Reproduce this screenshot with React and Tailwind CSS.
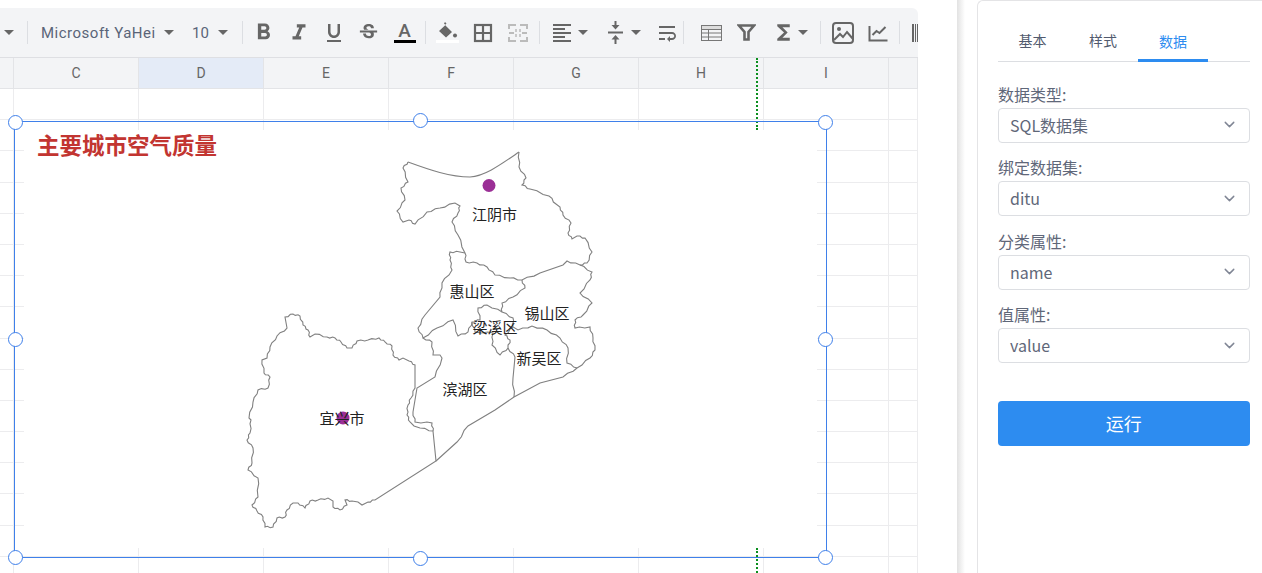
import { ChevronDown } from "lucide-react";
import {
  MdFormatBold,
  MdFormatItalic,
  MdFormatUnderlined,
  MdStrikethroughS,
  MdFormatAlignLeft,
  MdWrapText,
  MdFunctions,
} from "react-icons/md";

const cols = ["", "C", "D", "E", "F", "G", "H", "I", ""];
const colWidths = ["w-[14px]", "w-[125px]", "w-[125px]", "w-[125px]", "w-[125px]", "w-[125px]", "w-[125px]", "w-[125px]", "w-[29px]"];
const rows = Array.from({ length: 16 });

const Sep = ({ className = "" }) => <div className={`w-px h-[23px] bg-[#dcdee2] shrink-0 ${className}`} />;

const Caret = ({ className = "" }) => (
  <span className={`w-0 h-0 shrink-0 border-x-[5px] border-x-transparent border-t-[5px] border-t-[#666] ${className}`} />
);

const Tool = ({ children, className = "w-[35px]" }) => (
  <div className={`shrink-0 flex items-center justify-center text-[#666] ${className}`}>{children}</div>
);

const FillIcon = () => (
  <div className="flex flex-col items-center">
    <svg width="20" height="17" viewBox="0 0 20 17" fill="#666">
      <path d="M7 0l1.5 1.5-1.5 1.5 7 7-6 5.5-7-6.5 6.5-6-1.5-1.5z" />
      <circle cx="17" cy="13.5" r="2" />
    </svg>
    <span className="w-[23px] h-[3px] bg-white mt-[1px]" />
  </div>
);

const GridIcon = () => (
  <svg width="20" height="20" viewBox="0 0 20 20" fill="none" stroke="#666" strokeWidth="2.2">
    <rect x="2" y="2" width="16" height="16" />
    <path d="M10 2v16M2 10h16" />
  </svg>
);

const MergeIcon = () => (
  <svg width="20" height="18" viewBox="0 0 20 18" fill="none" stroke="#bbb" strokeWidth="2">
    <path d="M1 5V1h7M12 1h7v4M1 13v4h7M12 17h7v-4M1 9h5M19 9h-5" />
    <path d="M8 5v3M12 5v3M8 10v3M12 10v3" strokeWidth="1.5" />
  </svg>
);

const ValignIcon = () => (
  <svg width="17" height="23" viewBox="0 0 17 23" fill="#666" stroke="none">
    <rect x="1" y="10.5" width="15" height="2" />
    <path d="M7.5 0h2v4h3l-4 4.5-4-4.5h3zM8.5 14l4 4.5h-3V23h-2v-4.5h-3z" />
  </svg>
);

const TableIcon = () => (
  <svg width="21" height="16" viewBox="0 0 21 16" fill="none" stroke="#777" strokeWidth="1">
    <rect x="0.5" y="0.5" width="20" height="15" fill="#ddd" />
    <rect x="0.5" y="4.5" width="20" height="11" fill="#f3f4f6" />
    <path d="M0.5 8h20M0.5 12h20M7.5 4.5v11" />
  </svg>
);

const FilterIcon = () => (
  <svg width="19" height="17" viewBox="0 0 19 17" fill="none" stroke="#666" strokeWidth="2.6">
    <path d="M2 1.5h15l-5.5 6.5v7.5h-4v-7.5z" />
  </svg>
);

const ImageIcon = () => (
  <svg width="22" height="22" viewBox="0 0 22 22" fill="none" stroke="#666" strokeWidth="2">
    <rect x="1" y="1" width="20" height="20" rx="3" />
    <circle cx="7" cy="7" r="2" fill="#666" stroke="none" />
    <path d="M2 18l6-6 3 3 4-5 6 7" />
  </svg>
);

const ChartIcon = () => (
  <svg width="20" height="20" viewBox="0 0 20 20" fill="none" stroke="#666" strokeWidth="2">
    <path d="M1.5 3v14.5h18" />
    <path d="M4.5 12l4-4 3 2 6-6" />
  </svg>
);

const BarcodeIcon = () => (
  <svg width="16" height="18" viewBox="0 0 16 18" fill="#666" className="ml-[2px]">
    <path d="M0 0h2v18H0zM3 0h1v18H3zM5 0h3v18H5zM9 0h1v18H9z" />
  </svg>
);

const Toolbar = () => (
  <div className="h-[50px] mt-[8px] bg-[#f3f4f6] rounded-tr-[6px] border-b border-[#dedfe3] flex items-center overflow-hidden">
    <Caret className="ml-[4px]" />
    <Sep className="ml-[13px]" />
    <span className="ml-[13px] w-[116px] shrink-0 text-[15px] tracking-[0.5px] text-[#5a6478] font-['Roboto',sans-serif] whitespace-nowrap pt-[1px]">
      Microsoft YaHei
    </span>
    <Caret className="ml-[7px]" />
    <span className="ml-[18px] w-[18px] shrink-0 text-[15px] text-[#5a6478] font-['Roboto',sans-serif] pt-[1px]">10</span>
    <Caret className="ml-[8px]" />
    <Sep className="ml-[14px]" />
    <Tool className="w-[35px] ml-[3px]"><MdFormatBold size={27} /></Tool>
    <Tool><MdFormatItalic size={26} /></Tool>
    <Tool><MdFormatUnderlined size={24} /></Tool>
    <Tool><MdStrikethroughS size={23} /></Tool>
    <Tool className="w-[36px] pl-[1px]">
      <div className="flex flex-col items-center">
        <span className="text-[19px] leading-[17px] text-[#666] font-['Roboto',sans-serif] font-medium">A</span>
        <span className="w-[22px] h-[3px] bg-black mt-[1px]" />
      </div>
    </Tool>
    <Sep className="ml-[3px]" />
    <Tool className="w-[43px]"><FillIcon /></Tool>
    <Tool className="w-[27px]"><GridIcon /></Tool>
    <Tool className="w-[43px]"><MergeIcon /></Tool>
    <Sep />
    <Tool className="w-[44px]"><MdFormatAlignLeft size={24} /></Tool>
    <Caret className="-ml-[6px]" />
    <Tool className="w-[54px]"><ValignIcon /></Tool>
    <Caret className="-ml-[11px]" />
    <Tool className="w-[52px]"><MdWrapText size={24} /></Tool>
    <Sep className="-ml-[10px]" />
    <Tool className="w-[43px] ml-[6px]"><TableIcon /></Tool>
    <Tool className="w-[27px]"><FilterIcon /></Tool>
    <Tool className="w-[46px]"><MdFunctions size={25} /></Tool>
    <Caret className="-ml-[8px]" />
    <Sep className="ml-[12px]" />
    <Tool className="w-[43px]"><ImageIcon /></Tool>
    <Tool className="w-[27px]"><ChartIcon /></Tool>
    <Sep className="ml-[8px]" />
    <Tool className="w-[20px] justify-start ml-[10px]"><BarcodeIcon /></Tool>
  </div>
);

const Sheet = () => (
  <div className="flex flex-col">
    <div className="flex h-[31px] bg-[#f3f4f6] border-b border-[#e3e4e7]">
      {cols.map((c, i) => (
        <div
          key={i}
          className={`${colWidths[i]} shrink-0 border-r border-[#e3e4e7] flex items-center justify-center text-[14px] text-[#666] font-['Roboto',sans-serif] ${c === "D" ? "bg-[#e4ebf7]" : ""}`}
        >
          {c}
        </div>
      ))}
    </div>
    {rows.map((_, r) => (
      <div key={r} className="flex h-[31.2px] shrink-0">
        {cols.map((c, i) => (
          <div key={i} className={`${colWidths[i]} shrink-0 border-r border-b border-[#ececee]`} />
        ))}
      </div>
    ))}
  </div>
);

// short edges get a small wobble so the borders look like real map data, long ones stay straight
const rough = (d) => {
  const pts = d
    .replace(/[MLZ]/g, " ")
    .trim()
    .split(/\s+/)
    .map(Number);
  const closed = /Z/.test(d);
  let out = `M${pts[0]} ${pts[1]}`;
  for (let i = 2; i < pts.length; i += 2) {
    const [x0, y0, x1, y1] = [pts[i - 2], pts[i - 1], pts[i], pts[i + 1]];
    const len = Math.hypot(x1 - x0, y1 - y0);
    if (len > 7 && len < 21) {
      const k = Math.sin(i * 12.9898) > 0 ? 1 : -1;
      const nx = (-(y1 - y0) / len) * 0.7 * k;
      const ny = ((x1 - x0) / len) * 0.7 * k;
      out += ` L${x0 + (x1 - x0) * 0.35 + nx} ${y0 + (y1 - y0) * 0.35 + ny}`;
      out += ` L${x0 + (x1 - x0) * 0.7 - nx} ${y0 + (y1 - y0) * 0.7 - ny}`;
    }
    out += ` L${x1} ${y1}`;
  }
  return closed ? out + " Z" : out;
};

const yixing =
  "M285 317 L293 314 L300 316 L303 325 L308 330 L310 337 L315 334 L327 337 L335 338 L341 342 L347 348 L352 348 L357 341 L368 340 L379 338 L385 342 L392 346 L393 355 L399 360 L403 358 L409 361 L415 365 L415 388 L411 398 L408 405 L407 415 L410 422 L414 426 L420 428 L433 431 L436 461 L375 500 L368 502 L362 505 L358 502 L352 501 L345 500 L347 505 L340 510 L333 507 L333 501 L328 498 L318 500 L310 501 L305 508 L298 503 L293 503 L287 510 L285 517 L277 518 L273 527 L265 527 L263 517 L257 511 L252 505 L258 497 L258 478 L248 470 L252 463 L253 448 L247 440 L250 433 L251 420 L249 418 L253 402 L258 390 L268 388 L270 377 L264 373 L262 360 L267 358 L270 347 L277 336 L287 328 Z";
const jiangyinNorth = "M408 162 C430 170 450 177 470 177 C485 176 500 165 519 152";
const jiangyin =
  "M519 152 L519 167 L526 178 L522 185 L530 189 L549 196 L556 204 L560 207 L563 215 L571 223 L568 233 L572 239 L577 236 L585 238 L592 252 L587 263 L580 265 L567 261 L563 265 L540 273 L522 280 L510 278 L495 275 L487 267 L477 263 L466 262 L465 253 L458 235 L452 222 L458 213 L460 206 L455 203 L440 208 L427 212 L415 224 L409 220 L403 222 L397 211 L405 200 L401 188 L408 182 L403 168 L408 162";
const inner = [
  "M465 253 L460 252 L450 252 L450 260 L452 270 L442 283 L440 297 L425 315 L418 328 L423 338 L437 328 L453 320 L458 336 L468 332 L472 322 L480 320 L478 308 L487 305 L502 312 L513 318 L513 327 L518 330 L532 326 L547 330 L560 338 L568 348 L567 363 L577 368",
  "M522 280 L525 288 L513 297 L502 303 L502 312",
  "M472 322 L475 332 L493 333 L492 345 L500 355 L508 348 L510 340 L505 335 L513 327",
  "M508 348 L515 357 L513 378 L514 397",
  "M423 338 L432 342 L433 355 L440 355 L442 358 L435 377 L417 388 L413 412 L415 422 L432 423 L433 431",
  "M436 461 L457 442 L468 426 L495 410 L514 397 L540 383 L563 377 L577 368 L590 358 L595 350 L593 338 L590 327 L575 328 L575 320 L583 315 L592 303 L580 293 L590 280 L592 272 L580 265",
];

const labels = [
  ["江阴市", 494.5, 220],
  ["惠山区", 472, 297],
  ["锡山区", 547, 319],
  ["梁溪区", 495, 333],
  ["新吴区", 539, 364],
  ["滨湖区", 465, 395],
  ["宜兴市", 342, 424],
];

const handles = [
  "left-[8px] top-[115px]",
  "left-[413px] top-[113px]",
  "left-[818px] top-[115px]",
  "left-[8px] top-[332px]",
  "left-[818px] top-[332px]",
  "left-[8px] top-[550px]",
  "left-[413px] top-[551px]",
  "left-[818px] top-[550px]",
];

const ChartOverlay = () => (
  <>
    <div className="absolute left-[24px] top-[130px] w-[793px] h-[418px] bg-white" />
    <div className="absolute left-[756px] top-[58px] h-[72px] border-l-2 border-dotted border-[#0a8f1e]" />
    <div className="absolute left-[756px] top-[548px] h-[25px] border-l-2 border-dotted border-[#0a8f1e]" />
    <div className="absolute left-[14px] top-[121px] w-[813px] h-[437px] border border-[#3f80ea]" />
    <div className="absolute left-[37px] top-[128px] text-[22.5px] leading-[32px] font-bold text-[#c23531] font-['Noto_Sans_CJK_SC',sans-serif]">
      主要城市空气质量
    </div>
    <svg className="absolute left-0 top-0" width="918" height="573" viewBox="0 0 918 573" fill="none" stroke="#808080" strokeWidth="1.1">
      <path d={rough(yixing)} fill="#fff" />
      <path d={jiangyinNorth} />
      <path d={rough(jiangyin)} />
      {inner.map((d, i) => (
        <path key={i} d={rough(d)} />
      ))}
      <circle cx="489" cy="185.5" r="6.5" fill="#9b2f96" stroke="none" />
      <circle cx="343" cy="418" r="6.5" fill="#9b2f96" stroke="none" />
      {labels.map(([t, x, y]) => (
        <text key={t} x={x} y={y} textAnchor="middle" fontSize="15" fill="#222" stroke="none" fontFamily="'Noto Sans CJK SC', sans-serif">
          {t}
        </text>
      ))}
    </svg>
    {handles.map((h) => (
      <span key={h} className={`absolute ${h} w-[15px] h-[15px] rounded-full bg-white border border-[#3f80ea]`} />
    ))}
  </>
);

const Field = ({ label, value }) => (
  <div className="h-[73.5px] flex flex-col justify-end">
    <label className="text-[16px] leading-[22px] mb-[3px] text-[#5f6779]">{label}</label>
    <div className="h-[35px] shrink-0 border border-[#dcdee2] rounded-[4px] flex items-center justify-between pl-[11px] pr-[11px] pb-[1px] text-[16px] text-[#5f6779]">
      <span>{value}</span>
      <ChevronDown size={17} strokeWidth={2} className="text-[#808695]" />
    </div>
  </div>
);

const Panel = () => (
  <div className="flex-1 min-w-0 border-l border-t border-[#e4e4e6] rounded-tl-[6px] pl-[20px] pr-[12.5px] font-['Noto_Sans_CJK_SC',sans-serif]">
    <div className="h-[61px] flex items-end border-b border-[#dcdee2]">
      <div className="w-[70px] h-[38px] pb-[4px] pr-[1px] flex items-center justify-center text-[14px] text-[#515a6e]">基本</div>
      <div className="w-[70px] h-[38px] pb-[4px] flex items-center justify-center text-[14px] text-[#515a6e]">样式</div>
      <div className="w-[70px] h-[38px] pb-[1px] -mb-px flex items-center justify-center text-[14px] text-[#2d8cf0] border-b-[3px] border-[#2d8cf0]">数据</div>
    </div>
    <div className="pt-[7px]">
      <Field label="数据类型:" value="SQL数据集" />
      <Field label="绑定数据集:" value="ditu" />
      <Field label="分类属性:" value="name" />
      <Field label="值属性:" value="value" />
    </div>
    <button className="mt-[38px] w-full h-[45px] pb-[1px] rounded-[4px] bg-[#2d8cf0] text-white text-[18px]">运行</button>
  </div>
);

export default function App() {
  return (
    <div className="w-[1262px] h-[573px] overflow-hidden bg-white flex">
      <div className="relative w-[918px] h-[573px] shrink-0 overflow-hidden">
        <Toolbar />
        <Sheet />
        <ChartOverlay />
      </div>
      <div className="w-[39px] shrink-0 relative">
        <div className="absolute left-[39px] top-0 h-full w-[8px] bg-gradient-to-r from-[#e2e2e2] to-white" />
      </div>
      <div className="w-[20px] shrink-0" />
      <Panel />
    </div>
  );
}
